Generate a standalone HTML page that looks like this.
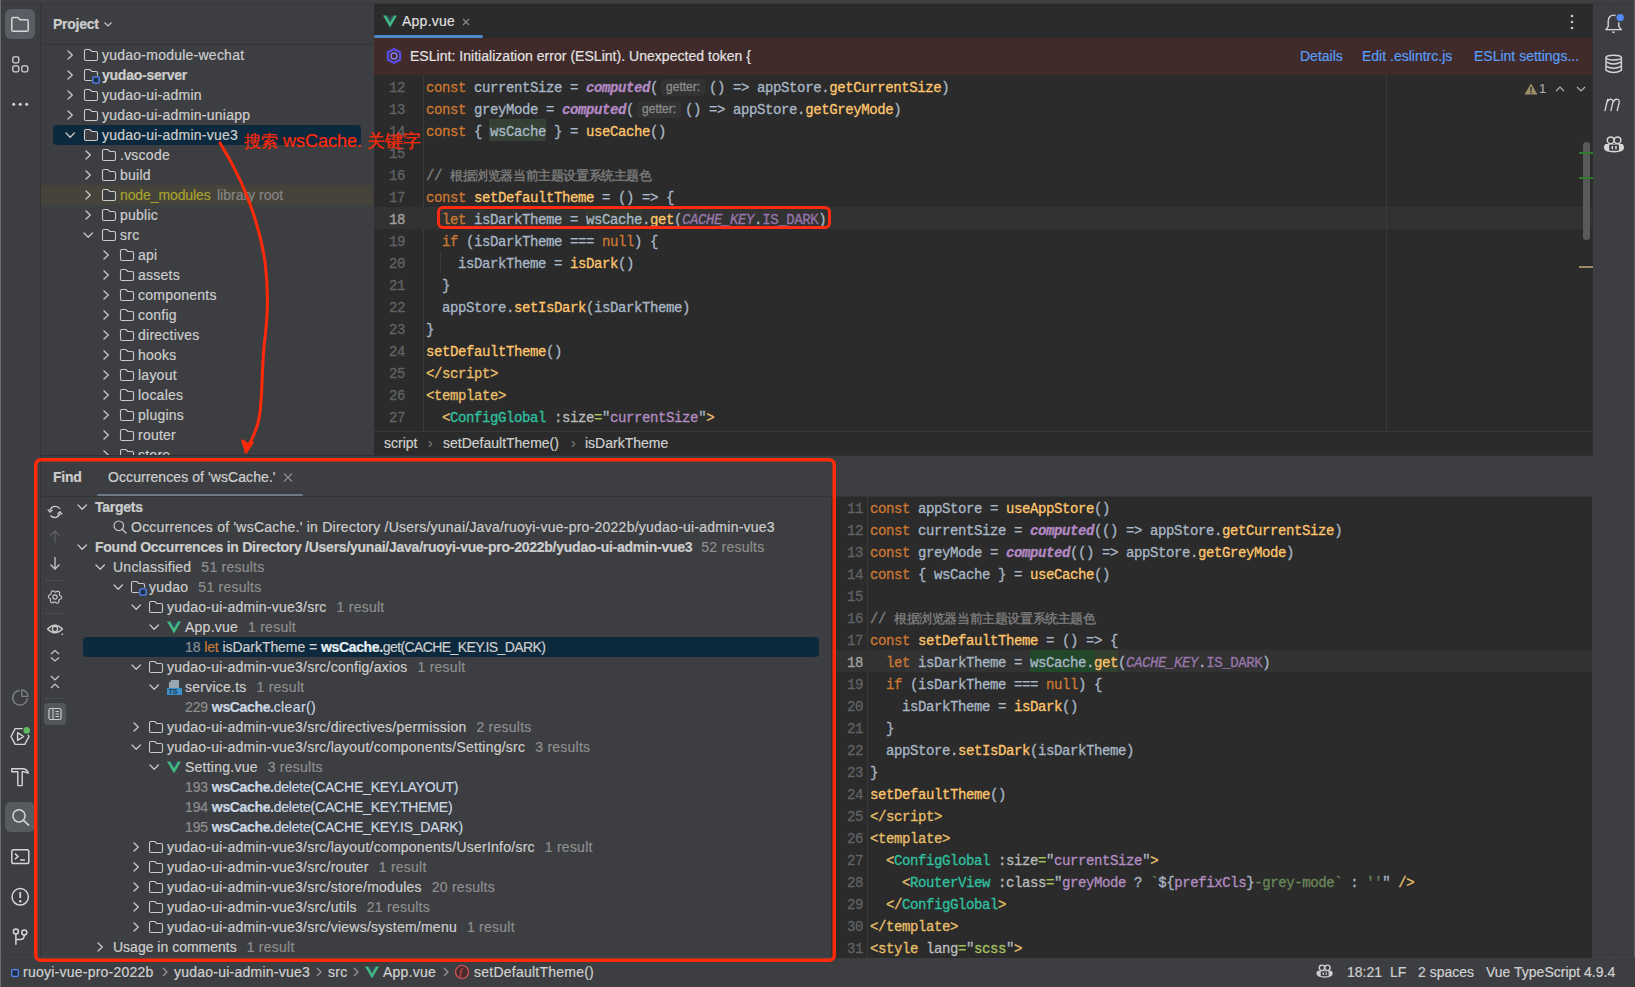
<!DOCTYPE html><html><head><meta charset="utf-8"><title>IDE</title><style>
html,body{margin:0;padding:0}
body{width:1635px;height:987px;overflow:hidden;position:relative;background:#3C3E41}
.t{position:absolute;white-space:pre;font-family:"Liberation Sans",sans-serif;font-size:14px;line-height:20px;color:#D2D2D2;letter-spacing:0.24px;-webkit-text-stroke:0.2px currentColor}
.t b,.b{font-weight:700;letter-spacing:-0.25px}

.m{position:absolute;white-space:pre;font-family:"Liberation Mono",monospace;font-size:14px;letter-spacing:-0.4px;line-height:22px;color:#A9B7C6;-webkit-text-stroke:0.3px currentColor}
.k{color:#CC7832}.d{color:#A9B7C6}.f{color:#FFC66D}.ci{color:#B389C5;font-style:italic;font-weight:700}
.c{color:#808080}.tg{color:#E8BF6A}.g{color:#2FC0A0}.a{color:#BABABA}.sg{color:#A5C25C}.sd{color:#6A8759}
.cj{font-size:13.33px}.v{color:#B48DC1}.cs{color:#9876AA;font-style:italic}.pr{color:#9876AA}.w{color:#A9B7C6}
</style></head><body><div style="position:absolute;left:0;top:0;width:1635px;height:3px;background:#3F4043"></div>
<div style="position:absolute;left:0;top:3px;width:1635px;height:1px;background:#38393B"></div>
<div style="position:absolute;left:0px;top:4px;width:41px;height:956px;background:#3C3E41;"></div>
<div style="position:absolute;left:0px;top:0px;width:1px;height:987px;background:#6B6D70;"></div>
<div style="position:absolute;left:40px;top:4px;width:1px;height:956px;background:#313335;"></div>
<div style="position:absolute;left:41px;top:4px;width:333px;height:451px;background:#3C3E41;"></div>
<div style="position:absolute;left:41px;top:44px;width:333px;height:1px;background:#333537;"></div>
<div style="position:absolute;left:373px;top:4px;width:1px;height:451px;background:#414245;"></div>
<div style="position:absolute;left:374px;top:4px;width:1219px;height:451px;background:#2B2B2B;"></div>
<div style="position:absolute;left:1593px;top:4px;width:1px;height:953px;background:#3A3B3E;"></div>
<div style="position:absolute;left:1593px;top:4px;width:42px;height:953px;background:#3C3E41;"></div>
<div style="position:absolute;left:1613px;top:4px;width:0;height:953px;border-left:1px dotted #36373A"></div>
<div style="position:absolute;left:1634px;top:0px;width:1px;height:957px;background:#5E5F62;"></div>
<div style="position:absolute;left:41px;top:455px;width:1551px;height:505px;background:#3C3E41;"></div>
<div style="position:absolute;left:41px;top:455px;width:1551px;height:1px;background:#2E3032;"></div>
<div style="position:absolute;left:0px;top:957px;width:1635px;height:30px;background:#3C3E41;"></div>
<div style="position:absolute;left:0;top:957px;width:1635px;height:0;border-top:1px dotted #4A4B4E"></div>
<div style="position:absolute;left:0px;top:0px;width:1px;height:987px;background:#6B6D70;"></div>
<div style="position:absolute;left:5px;top:9px;width:30px;height:30px;background:#5A5D63;border-radius:6px"></div>
<svg style="position:absolute;left:10px;top:14px;" width="20" height="20" viewBox="0 0 20 20" fill="none"><path d="M1.8 5 Q1.8 3.5 3.3 3.5 H7.8 L10 5.8 H16.7 Q18.2 5.8 18.2 7.3 V15.8 Q18.2 17.3 16.7 17.3 H3.3 Q1.8 17.3 1.8 15.8 Z" stroke="#D6D6D6" stroke-width="1.5"/></svg>
<svg style="position:absolute;left:10px;top:54px;" width="20" height="20" viewBox="0 0 20 20" fill="none"><rect x="2.8" y="2.8" width="6" height="6" rx="1.5" stroke="#D6D6D6" stroke-width="1.3"/><rect x="2.8" y="11.8" width="6" height="6" rx="1.5" stroke="#D6D6D6" stroke-width="1.3"/><rect x="11.8" y="11.8" width="6" height="6" rx="1.5" stroke="#D6D6D6" stroke-width="1.3"/></svg>
<svg style="position:absolute;left:10px;top:94px;" width="20" height="20" viewBox="0 0 20 20" fill="none"><circle cx="3.7" cy="10.3" r="1.5" fill="#D6D6D6"/><circle cx="10.2" cy="10.3" r="1.5" fill="#D6D6D6"/><circle cx="16.7" cy="10.3" r="1.5" fill="#D6D6D6"/></svg>
<div class="t" style="left:53px;top:14px;color:#CDCDCD;font-size:14px;line-height:20px;font-weight:700;letter-spacing:-0.25px;">Project</div>
<svg style="position:absolute;left:103px;top:19px;" width="10" height="10" viewBox="0 0 10 10" fill="none"><path d="M1.5 3.5 L5 7 L8.5 3.5" stroke="#C8C8C8" stroke-width="1.2" fill="none"/></svg>
<div style="position:absolute;left:41px;top:45px;width:332px;height:410px;overflow:hidden">
<svg style="position:absolute;left:23px;top:0px;" width="10" height="20" viewBox="0 0 10 20" fill="none"><path d="M4 6 L8.3 10 L4 14" stroke="#C8C8C8" stroke-width="1.3" stroke-linecap="round" stroke-linejoin="round"/></svg>
<svg style="position:absolute;left:42px;top:2px;" width="16" height="16" viewBox="0 0 16 16" fill="none"><path d="M1.5 4 Q1.5 2.5 3 2.5 H6.8 L8.8 4.5 H13 Q14.5 4.5 14.5 6 V12 Q14.5 13.5 13 13.5 H3 Q1.5 13.5 1.5 12 Z" stroke="#CACACA" stroke-width="1.1" fill="#3A3C3F"/></svg>
<div class="t" style="left:61px;top:0px;color:#CDCDCD;font-size:14px;line-height:20px;font-weight:400;">yudao-module-wechat</div>
<svg style="position:absolute;left:23px;top:20px;" width="10" height="20" viewBox="0 0 10 20" fill="none"><path d="M4 6 L8.3 10 L4 14" stroke="#C8C8C8" stroke-width="1.3" stroke-linecap="round" stroke-linejoin="round"/></svg>
<svg style="position:absolute;left:42px;top:22px;" width="18" height="18" viewBox="0 0 18 18" fill="none"><path d="M1.5 4 Q1.5 2.5 3 2.5 H6.8 L8.8 4.5 H13 Q14.5 4.5 14.5 6 V12 Q14.5 13.5 13 13.5 H3 Q1.5 13.5 1.5 12 Z" stroke="#CACACA" stroke-width="1.1" fill="#3A3C3F"/><rect x="8.6" y="8.6" width="8.8" height="8.8" fill="#3C3E41"/><rect x="9.8" y="9.8" width="6.4" height="6.4" rx="1.4" stroke="#548AF7" stroke-width="1.3" fill="#1E3048"/></svg>
<div class="t" style="left:61px;top:20px;color:#CDCDCD;font-size:14px;line-height:20px;font-weight:700;letter-spacing:-0.25px;">yudao-server</div>
<svg style="position:absolute;left:23px;top:40px;" width="10" height="20" viewBox="0 0 10 20" fill="none"><path d="M4 6 L8.3 10 L4 14" stroke="#C8C8C8" stroke-width="1.3" stroke-linecap="round" stroke-linejoin="round"/></svg>
<svg style="position:absolute;left:42px;top:42px;" width="16" height="16" viewBox="0 0 16 16" fill="none"><path d="M1.5 4 Q1.5 2.5 3 2.5 H6.8 L8.8 4.5 H13 Q14.5 4.5 14.5 6 V12 Q14.5 13.5 13 13.5 H3 Q1.5 13.5 1.5 12 Z" stroke="#CACACA" stroke-width="1.1" fill="#3A3C3F"/></svg>
<div class="t" style="left:61px;top:40px;color:#CDCDCD;font-size:14px;line-height:20px;font-weight:400;">yudao-ui-admin</div>
<svg style="position:absolute;left:23px;top:60px;" width="10" height="20" viewBox="0 0 10 20" fill="none"><path d="M4 6 L8.3 10 L4 14" stroke="#C8C8C8" stroke-width="1.3" stroke-linecap="round" stroke-linejoin="round"/></svg>
<svg style="position:absolute;left:42px;top:62px;" width="16" height="16" viewBox="0 0 16 16" fill="none"><path d="M1.5 4 Q1.5 2.5 3 2.5 H6.8 L8.8 4.5 H13 Q14.5 4.5 14.5 6 V12 Q14.5 13.5 13 13.5 H3 Q1.5 13.5 1.5 12 Z" stroke="#CACACA" stroke-width="1.1" fill="#3A3C3F"/></svg>
<div class="t" style="left:61px;top:60px;color:#CDCDCD;font-size:14px;line-height:20px;font-weight:400;">yudao-ui-admin-uniapp</div>
<div style="position:absolute;left:12px;top:80px;width:308px;height:20px;background:#0D293E;border-radius:4px"></div>
<svg style="position:absolute;left:23px;top:80px;" width="12" height="20" viewBox="0 0 12 20" fill="none"><path d="M2 8 L6.2 12.2 L10.4 8" stroke="#C8C8C8" stroke-width="1.3" stroke-linecap="round" stroke-linejoin="round"/></svg>
<svg style="position:absolute;left:42px;top:82px;" width="16" height="16" viewBox="0 0 16 16" fill="none"><path d="M1.5 4 Q1.5 2.5 3 2.5 H6.8 L8.8 4.5 H13 Q14.5 4.5 14.5 6 V12 Q14.5 13.5 13 13.5 H3 Q1.5 13.5 1.5 12 Z" stroke="#CACACA" stroke-width="1.1" fill="#3A3C3F"/></svg>
<div class="t" style="left:61px;top:80px;color:#CDCDCD;font-size:14px;line-height:20px;font-weight:400;">yudao-ui-admin-vue3</div>
<svg style="position:absolute;left:41px;top:100px;" width="10" height="20" viewBox="0 0 10 20" fill="none"><path d="M4 6 L8.3 10 L4 14" stroke="#C8C8C8" stroke-width="1.3" stroke-linecap="round" stroke-linejoin="round"/></svg>
<svg style="position:absolute;left:60px;top:102px;" width="16" height="16" viewBox="0 0 16 16" fill="none"><path d="M1.5 4 Q1.5 2.5 3 2.5 H6.8 L8.8 4.5 H13 Q14.5 4.5 14.5 6 V12 Q14.5 13.5 13 13.5 H3 Q1.5 13.5 1.5 12 Z" stroke="#CACACA" stroke-width="1.1" fill="#3A3C3F"/></svg>
<div class="t" style="left:79px;top:100px;color:#CDCDCD;font-size:14px;line-height:20px;font-weight:400;">.vscode</div>
<svg style="position:absolute;left:41px;top:120px;" width="10" height="20" viewBox="0 0 10 20" fill="none"><path d="M4 6 L8.3 10 L4 14" stroke="#C8C8C8" stroke-width="1.3" stroke-linecap="round" stroke-linejoin="round"/></svg>
<svg style="position:absolute;left:60px;top:122px;" width="16" height="16" viewBox="0 0 16 16" fill="none"><path d="M1.5 4 Q1.5 2.5 3 2.5 H6.8 L8.8 4.5 H13 Q14.5 4.5 14.5 6 V12 Q14.5 13.5 13 13.5 H3 Q1.5 13.5 1.5 12 Z" stroke="#CACACA" stroke-width="1.1" fill="#3A3C3F"/></svg>
<div class="t" style="left:79px;top:120px;color:#CDCDCD;font-size:14px;line-height:20px;font-weight:400;">build</div>
<div style="position:absolute;left:0px;top:140px;width:332px;height:20px;background:#45433A;"></div>
<svg style="position:absolute;left:41px;top:140px;" width="10" height="20" viewBox="0 0 10 20" fill="none"><path d="M4 6 L8.3 10 L4 14" stroke="#C8C8C8" stroke-width="1.3" stroke-linecap="round" stroke-linejoin="round"/></svg>
<svg style="position:absolute;left:60px;top:142px;" width="16" height="16" viewBox="0 0 16 16" fill="none"><path d="M1.5 4 Q1.5 2.5 3 2.5 H6.8 L8.8 4.5 H13 Q14.5 4.5 14.5 6 V12 Q14.5 13.5 13 13.5 H3 Q1.5 13.5 1.5 12 Z" stroke="#CACACA" stroke-width="1.1" fill="#3A3C3F"/></svg>
<div class="t" style="left:79px;top:140px;color:#A9A22E;font-size:14px;line-height:20px;font-weight:400;letter-spacing:-0.1px">node_modules</div>
<div class="t" style="left:176px;top:140px;color:#858585;font-size:14px;line-height:20px;font-weight:400;letter-spacing:0">library root</div>
<svg style="position:absolute;left:41px;top:160px;" width="10" height="20" viewBox="0 0 10 20" fill="none"><path d="M4 6 L8.3 10 L4 14" stroke="#C8C8C8" stroke-width="1.3" stroke-linecap="round" stroke-linejoin="round"/></svg>
<svg style="position:absolute;left:60px;top:162px;" width="16" height="16" viewBox="0 0 16 16" fill="none"><path d="M1.5 4 Q1.5 2.5 3 2.5 H6.8 L8.8 4.5 H13 Q14.5 4.5 14.5 6 V12 Q14.5 13.5 13 13.5 H3 Q1.5 13.5 1.5 12 Z" stroke="#CACACA" stroke-width="1.1" fill="#3A3C3F"/></svg>
<div class="t" style="left:79px;top:160px;color:#CDCDCD;font-size:14px;line-height:20px;font-weight:400;">public</div>
<svg style="position:absolute;left:41px;top:180px;" width="12" height="20" viewBox="0 0 12 20" fill="none"><path d="M2 8 L6.2 12.2 L10.4 8" stroke="#C8C8C8" stroke-width="1.3" stroke-linecap="round" stroke-linejoin="round"/></svg>
<svg style="position:absolute;left:60px;top:182px;" width="16" height="16" viewBox="0 0 16 16" fill="none"><path d="M1.5 4 Q1.5 2.5 3 2.5 H6.8 L8.8 4.5 H13 Q14.5 4.5 14.5 6 V12 Q14.5 13.5 13 13.5 H3 Q1.5 13.5 1.5 12 Z" stroke="#CACACA" stroke-width="1.1" fill="#3A3C3F"/></svg>
<div class="t" style="left:79px;top:180px;color:#CDCDCD;font-size:14px;line-height:20px;font-weight:400;">src</div>
<svg style="position:absolute;left:59px;top:200px;" width="10" height="20" viewBox="0 0 10 20" fill="none"><path d="M4 6 L8.3 10 L4 14" stroke="#C8C8C8" stroke-width="1.3" stroke-linecap="round" stroke-linejoin="round"/></svg>
<svg style="position:absolute;left:78px;top:202px;" width="16" height="16" viewBox="0 0 16 16" fill="none"><path d="M1.5 4 Q1.5 2.5 3 2.5 H6.8 L8.8 4.5 H13 Q14.5 4.5 14.5 6 V12 Q14.5 13.5 13 13.5 H3 Q1.5 13.5 1.5 12 Z" stroke="#CACACA" stroke-width="1.1" fill="#3A3C3F"/></svg>
<div class="t" style="left:97px;top:200px;color:#CDCDCD;font-size:14px;line-height:20px;font-weight:400;">api</div>
<svg style="position:absolute;left:59px;top:220px;" width="10" height="20" viewBox="0 0 10 20" fill="none"><path d="M4 6 L8.3 10 L4 14" stroke="#C8C8C8" stroke-width="1.3" stroke-linecap="round" stroke-linejoin="round"/></svg>
<svg style="position:absolute;left:78px;top:222px;" width="16" height="16" viewBox="0 0 16 16" fill="none"><path d="M1.5 4 Q1.5 2.5 3 2.5 H6.8 L8.8 4.5 H13 Q14.5 4.5 14.5 6 V12 Q14.5 13.5 13 13.5 H3 Q1.5 13.5 1.5 12 Z" stroke="#CACACA" stroke-width="1.1" fill="#3A3C3F"/></svg>
<div class="t" style="left:97px;top:220px;color:#CDCDCD;font-size:14px;line-height:20px;font-weight:400;">assets</div>
<svg style="position:absolute;left:59px;top:240px;" width="10" height="20" viewBox="0 0 10 20" fill="none"><path d="M4 6 L8.3 10 L4 14" stroke="#C8C8C8" stroke-width="1.3" stroke-linecap="round" stroke-linejoin="round"/></svg>
<svg style="position:absolute;left:78px;top:242px;" width="16" height="16" viewBox="0 0 16 16" fill="none"><path d="M1.5 4 Q1.5 2.5 3 2.5 H6.8 L8.8 4.5 H13 Q14.5 4.5 14.5 6 V12 Q14.5 13.5 13 13.5 H3 Q1.5 13.5 1.5 12 Z" stroke="#CACACA" stroke-width="1.1" fill="#3A3C3F"/></svg>
<div class="t" style="left:97px;top:240px;color:#CDCDCD;font-size:14px;line-height:20px;font-weight:400;">components</div>
<svg style="position:absolute;left:59px;top:260px;" width="10" height="20" viewBox="0 0 10 20" fill="none"><path d="M4 6 L8.3 10 L4 14" stroke="#C8C8C8" stroke-width="1.3" stroke-linecap="round" stroke-linejoin="round"/></svg>
<svg style="position:absolute;left:78px;top:262px;" width="16" height="16" viewBox="0 0 16 16" fill="none"><path d="M1.5 4 Q1.5 2.5 3 2.5 H6.8 L8.8 4.5 H13 Q14.5 4.5 14.5 6 V12 Q14.5 13.5 13 13.5 H3 Q1.5 13.5 1.5 12 Z" stroke="#CACACA" stroke-width="1.1" fill="#3A3C3F"/></svg>
<div class="t" style="left:97px;top:260px;color:#CDCDCD;font-size:14px;line-height:20px;font-weight:400;">config</div>
<svg style="position:absolute;left:59px;top:280px;" width="10" height="20" viewBox="0 0 10 20" fill="none"><path d="M4 6 L8.3 10 L4 14" stroke="#C8C8C8" stroke-width="1.3" stroke-linecap="round" stroke-linejoin="round"/></svg>
<svg style="position:absolute;left:78px;top:282px;" width="16" height="16" viewBox="0 0 16 16" fill="none"><path d="M1.5 4 Q1.5 2.5 3 2.5 H6.8 L8.8 4.5 H13 Q14.5 4.5 14.5 6 V12 Q14.5 13.5 13 13.5 H3 Q1.5 13.5 1.5 12 Z" stroke="#CACACA" stroke-width="1.1" fill="#3A3C3F"/></svg>
<div class="t" style="left:97px;top:280px;color:#CDCDCD;font-size:14px;line-height:20px;font-weight:400;">directives</div>
<svg style="position:absolute;left:59px;top:300px;" width="10" height="20" viewBox="0 0 10 20" fill="none"><path d="M4 6 L8.3 10 L4 14" stroke="#C8C8C8" stroke-width="1.3" stroke-linecap="round" stroke-linejoin="round"/></svg>
<svg style="position:absolute;left:78px;top:302px;" width="16" height="16" viewBox="0 0 16 16" fill="none"><path d="M1.5 4 Q1.5 2.5 3 2.5 H6.8 L8.8 4.5 H13 Q14.5 4.5 14.5 6 V12 Q14.5 13.5 13 13.5 H3 Q1.5 13.5 1.5 12 Z" stroke="#CACACA" stroke-width="1.1" fill="#3A3C3F"/></svg>
<div class="t" style="left:97px;top:300px;color:#CDCDCD;font-size:14px;line-height:20px;font-weight:400;">hooks</div>
<svg style="position:absolute;left:59px;top:320px;" width="10" height="20" viewBox="0 0 10 20" fill="none"><path d="M4 6 L8.3 10 L4 14" stroke="#C8C8C8" stroke-width="1.3" stroke-linecap="round" stroke-linejoin="round"/></svg>
<svg style="position:absolute;left:78px;top:322px;" width="16" height="16" viewBox="0 0 16 16" fill="none"><path d="M1.5 4 Q1.5 2.5 3 2.5 H6.8 L8.8 4.5 H13 Q14.5 4.5 14.5 6 V12 Q14.5 13.5 13 13.5 H3 Q1.5 13.5 1.5 12 Z" stroke="#CACACA" stroke-width="1.1" fill="#3A3C3F"/></svg>
<div class="t" style="left:97px;top:320px;color:#CDCDCD;font-size:14px;line-height:20px;font-weight:400;">layout</div>
<svg style="position:absolute;left:59px;top:340px;" width="10" height="20" viewBox="0 0 10 20" fill="none"><path d="M4 6 L8.3 10 L4 14" stroke="#C8C8C8" stroke-width="1.3" stroke-linecap="round" stroke-linejoin="round"/></svg>
<svg style="position:absolute;left:78px;top:342px;" width="16" height="16" viewBox="0 0 16 16" fill="none"><path d="M1.5 4 Q1.5 2.5 3 2.5 H6.8 L8.8 4.5 H13 Q14.5 4.5 14.5 6 V12 Q14.5 13.5 13 13.5 H3 Q1.5 13.5 1.5 12 Z" stroke="#CACACA" stroke-width="1.1" fill="#3A3C3F"/></svg>
<div class="t" style="left:97px;top:340px;color:#CDCDCD;font-size:14px;line-height:20px;font-weight:400;">locales</div>
<svg style="position:absolute;left:59px;top:360px;" width="10" height="20" viewBox="0 0 10 20" fill="none"><path d="M4 6 L8.3 10 L4 14" stroke="#C8C8C8" stroke-width="1.3" stroke-linecap="round" stroke-linejoin="round"/></svg>
<svg style="position:absolute;left:78px;top:362px;" width="16" height="16" viewBox="0 0 16 16" fill="none"><path d="M1.5 4 Q1.5 2.5 3 2.5 H6.8 L8.8 4.5 H13 Q14.5 4.5 14.5 6 V12 Q14.5 13.5 13 13.5 H3 Q1.5 13.5 1.5 12 Z" stroke="#CACACA" stroke-width="1.1" fill="#3A3C3F"/></svg>
<div class="t" style="left:97px;top:360px;color:#CDCDCD;font-size:14px;line-height:20px;font-weight:400;">plugins</div>
<svg style="position:absolute;left:59px;top:380px;" width="10" height="20" viewBox="0 0 10 20" fill="none"><path d="M4 6 L8.3 10 L4 14" stroke="#C8C8C8" stroke-width="1.3" stroke-linecap="round" stroke-linejoin="round"/></svg>
<svg style="position:absolute;left:78px;top:382px;" width="16" height="16" viewBox="0 0 16 16" fill="none"><path d="M1.5 4 Q1.5 2.5 3 2.5 H6.8 L8.8 4.5 H13 Q14.5 4.5 14.5 6 V12 Q14.5 13.5 13 13.5 H3 Q1.5 13.5 1.5 12 Z" stroke="#CACACA" stroke-width="1.1" fill="#3A3C3F"/></svg>
<div class="t" style="left:97px;top:380px;color:#CDCDCD;font-size:14px;line-height:20px;font-weight:400;">router</div>
<svg style="position:absolute;left:59px;top:400px;" width="10" height="20" viewBox="0 0 10 20" fill="none"><path d="M4 6 L8.3 10 L4 14" stroke="#C8C8C8" stroke-width="1.3" stroke-linecap="round" stroke-linejoin="round"/></svg>
<svg style="position:absolute;left:78px;top:402px;" width="16" height="16" viewBox="0 0 16 16" fill="none"><path d="M1.5 4 Q1.5 2.5 3 2.5 H6.8 L8.8 4.5 H13 Q14.5 4.5 14.5 6 V12 Q14.5 13.5 13 13.5 H3 Q1.5 13.5 1.5 12 Z" stroke="#CACACA" stroke-width="1.1" fill="#3A3C3F"/></svg>
<div class="t" style="left:97px;top:400px;color:#CDCDCD;font-size:14px;line-height:20px;font-weight:400;">store</div>
</div>
<svg style="position:absolute;left:382px;top:13px;" width="16" height="16" viewBox="0 0 16 16" fill="none"><path d="M1 2.5 H4.2 L8 9 L11.8 2.5 H15 L8 14.5 Z" fill="#41B883"/><path d="M4.2 2.5 H6.6 L8 5 L9.4 2.5 H11.8 L8 9 Z" fill="#35495E"/></svg>
<div class="t" style="left:402px;top:11px;color:#DFDFDF;font-size:14px;line-height:20px;font-weight:400;">App.vue</div>
<svg style="position:absolute;left:460px;top:16px;" width="12" height="12" viewBox="0 0 12 12" fill="none"><path d="M3 3 L9 9 M9 3 L3 9" stroke="#8C8C8C" stroke-width="1.1"/></svg>
<div style="position:absolute;left:374px;top:35px;width:109px;height:3px;background:#4A88C7;border-radius:2px"></div>
<svg style="position:absolute;left:1566px;top:12px;" width="12" height="20" viewBox="0 0 12 20" fill="none"><circle cx="6" cy="4" r="1.3" fill="#C8C8C8"/><circle cx="6" cy="10" r="1.3" fill="#C8C8C8"/><circle cx="6" cy="16" r="1.3" fill="#C8C8C8"/></svg>
<div style="position:absolute;left:374px;top:38px;width:1218px;height:37px;background:#402A2A;"></div>
<svg style="position:absolute;left:385px;top:47px;" width="18" height="18" viewBox="0 0 18 18" fill="none"><path d="M9 2 L15.1 5.5 V12.5 L9 16 L2.9 12.5 V5.5 Z" stroke="#5B4EE6" stroke-width="2.2" fill="none"/><circle cx="9" cy="9" r="3" stroke="#8A7FF0" stroke-width="1.4"/></svg>
<div class="t" style="left:410px;top:46px;color:#E2E2E2;font-size:14px;line-height:20px;font-weight:400;letter-spacing:0.03px">ESLint: Initialization error (ESLint). Unexpected token {</div>
<div class="t" style="left:1300px;top:46px;color:#589DF6;font-size:14px;line-height:20px;font-weight:400;letter-spacing:0">Details</div>
<div class="t" style="left:1362px;top:46px;color:#589DF6;font-size:14px;line-height:20px;font-weight:400;letter-spacing:0">Edit .eslintrc.js</div>
<div class="t" style="left:1474px;top:46px;color:#589DF6;font-size:14px;line-height:20px;font-weight:400;letter-spacing:0">ESLint settings...</div>
<div style="position:absolute;left:423px;top:75px;width:1px;height:357px;background:#393939;"></div>
<div style="position:absolute;left:374px;top:207px;width:1218px;height:22px;background:#323232;"></div>
<div style="position:absolute;left:1386px;top:75px;width:1px;height:357px;background:#393939;"></div>
<div style="position:absolute;left:489px;top:119px;width:57px;height:22px;background:#344134;"></div>
<div style="position:absolute;left:586px;top:207px;width:56px;height:22px;background:#33392F;"></div>
<div class="m" style="left:374px;top:77px;width:31px;text-align:right;color:#606366">12</div>
<div class="m" style="left:426px;top:77px"><span class="k">const </span><span class="d">currentSize = </span><span class="ci">computed</span><span class="d">(</span><span style="display:inline-block;background:#333333;color:#8C8C8C;font-family:'Liberation Sans';font-size:12px;letter-spacing:0;line-height:17px;padding:0 5px;border-radius:4px;margin:0 4px 0 3px;vertical-align:1px">getter:</span><span class="d">() =&gt; appStore.</span><span class="f">getCurrentSize</span><span class="d">)</span></div>
<div class="m" style="left:374px;top:99px;width:31px;text-align:right;color:#606366">13</div>
<div class="m" style="left:426px;top:99px"><span class="k">const </span><span class="d">greyMode = </span><span class="ci">computed</span><span class="d">(</span><span style="display:inline-block;background:#333333;color:#8C8C8C;font-family:'Liberation Sans';font-size:12px;letter-spacing:0;line-height:17px;padding:0 5px;border-radius:4px;margin:0 4px 0 3px;vertical-align:1px">getter:</span><span class="d">() =&gt; appStore.</span><span class="f">getGreyMode</span><span class="d">)</span></div>
<div class="m" style="left:374px;top:121px;width:31px;text-align:right;color:#606366">14</div>
<div class="m" style="left:426px;top:121px"><span class="k">const </span><span class="d">{ wsCache } = </span><span class="f">useCache</span><span class="d">()</span></div>
<div class="m" style="left:374px;top:143px;width:31px;text-align:right;color:#606366">15</div>
<div class="m" style="left:426px;top:143px"></div>
<div class="m" style="left:374px;top:165px;width:31px;text-align:right;color:#606366">16</div>
<div class="m" style="left:426px;top:165px"><span class="c">// </span><span class="c cj">根据浏览器当前主题设置系统主题色</span></div>
<div class="m" style="left:374px;top:187px;width:31px;text-align:right;color:#606366">17</div>
<div class="m" style="left:426px;top:187px"><span class="k">const </span><span class="f">setDefaultTheme</span><span class="d"> = () =&gt; {</span></div>
<div class="m" style="left:374px;top:209px;width:31px;text-align:right;color:#A4A3A3">18</div>
<div class="m" style="left:426px;top:209px"><span class="d">  </span><span class="k">let </span><span class="d">isDarkTheme = wsCache.</span><span class="f">get</span><span class="d">(</span><span class="cs">CACHE_KEY</span><span class="d">.</span><span class="pr">IS_DARK</span><span class="d">)</span></div>
<div class="m" style="left:374px;top:231px;width:31px;text-align:right;color:#606366">19</div>
<div class="m" style="left:426px;top:231px"><span class="d">  </span><span class="k">if </span><span class="d">(isDarkTheme === </span><span class="k">null</span><span class="d">) {</span></div>
<div class="m" style="left:374px;top:253px;width:31px;text-align:right;color:#606366">20</div>
<div class="m" style="left:426px;top:253px"><span class="d">    isDarkTheme = </span><span class="f">isDark</span><span class="d">()</span></div>
<div class="m" style="left:374px;top:275px;width:31px;text-align:right;color:#606366">21</div>
<div class="m" style="left:426px;top:275px"><span class="d">  }</span></div>
<div class="m" style="left:374px;top:297px;width:31px;text-align:right;color:#606366">22</div>
<div class="m" style="left:426px;top:297px"><span class="d">  appStore.</span><span class="f">setIsDark</span><span class="d">(isDarkTheme)</span></div>
<div class="m" style="left:374px;top:319px;width:31px;text-align:right;color:#606366">23</div>
<div class="m" style="left:426px;top:319px"><span class="d">}</span></div>
<div class="m" style="left:374px;top:341px;width:31px;text-align:right;color:#606366">24</div>
<div class="m" style="left:426px;top:341px"><span class="f">setDefaultTheme</span><span class="d">()</span></div>
<div class="m" style="left:374px;top:363px;width:31px;text-align:right;color:#606366">25</div>
<div class="m" style="left:426px;top:363px"><span class="tg">&lt;/script&gt;</span></div>
<div class="m" style="left:374px;top:385px;width:31px;text-align:right;color:#606366">26</div>
<div class="m" style="left:426px;top:385px"><span class="tg">&lt;template&gt;</span></div>
<div class="m" style="left:374px;top:407px;width:31px;text-align:right;color:#606366">27</div>
<div class="m" style="left:426px;top:407px"><span class="d">  </span><span class="tg">&lt;</span><span class="g">ConfigGlobal</span><span class="a"> :size</span><span class="sg">=</span><span class="d">"</span><span class="v">currentSize</span><span class="d">"</span><span class="tg">&gt;</span></div>
<div style="position:absolute;left:440px;top:251px;width:1px;height:22px;background:#3A3A3A;"></div>
<div style="position:absolute;left:437px;top:206px;width:388px;height:17px;border:3px solid #FF2A12;border-radius:6px"></div>
<svg style="position:absolute;left:1523px;top:82px;" width="16" height="14" viewBox="0 0 16 14" fill="none"><path d="M8 1.5 L14.5 12.5 H1.5 Z" fill="#9C8F6A"/><rect x="7.3" y="5" width="1.4" height="4.2" fill="#2B2B2B"/><rect x="7.3" y="10" width="1.4" height="1.4" fill="#2B2B2B"/></svg>
<div class="t" style="left:1539px;top:79px;color:#A9A9A9;font-size:13px;line-height:20px;font-weight:400;">1</div>
<svg style="position:absolute;left:1553px;top:82px;" width="14" height="14" viewBox="0 0 14 14" fill="none"><path d="M3 9 L7 5 L11 9" stroke="#B0B0B0" stroke-width="1.2" fill="none"/></svg>
<svg style="position:absolute;left:1574px;top:82px;" width="14" height="14" viewBox="0 0 14 14" fill="none"><path d="M3 5 L7 9 L11 5" stroke="#B0B0B0" stroke-width="1.2" fill="none"/></svg>
<div style="position:absolute;left:1583px;top:142px;width:7px;height:98px;background:#58595B;border-radius:3.5px"></div>
<div style="position:absolute;left:1579px;top:152px;width:14px;height:2px;background:#2E7A30;"></div>
<div style="position:absolute;left:1579px;top:177px;width:14px;height:2px;background:#2E7A30;"></div>
<div style="position:absolute;left:1579px;top:266px;width:14px;height:2px;background:#9C8A66;"></div>
<div style="position:absolute;left:374px;top:431px;width:1218px;height:1px;background:#393939;"></div>
<div class="t" style="left:384px;top:433px;color:#CFCFCF;font-size:14px;line-height:20px;font-weight:400;letter-spacing:0">script</div>
<div class="t" style="left:428px;top:433px;color:#7A7A7A;font-size:14px;line-height:20px;font-weight:400;">›</div>
<div class="t" style="left:443px;top:433px;color:#CFCFCF;font-size:14px;line-height:20px;font-weight:400;letter-spacing:0">setDefaultTheme()</div>
<div class="t" style="left:571px;top:433px;color:#7A7A7A;font-size:14px;line-height:20px;font-weight:400;">›</div>
<div class="t" style="left:585px;top:433px;color:#CFCFCF;font-size:14px;line-height:20px;font-weight:400;letter-spacing:0">isDarkTheme</div>
<div class="t" style="left:53px;top:467px;color:#CDCDCD;font-size:14px;line-height:20px;font-weight:700;letter-spacing:-0.25px;">Find</div>
<div class="t" style="left:108px;top:467px;color:#D0D0D0;font-size:14px;line-height:20px;font-weight:400;letter-spacing:0.08px">Occurrences of 'wsCache.'</div>
<svg style="position:absolute;left:281px;top:470px;" width="14" height="14" viewBox="0 0 14 14" fill="none"><path d="M3 3.5 L11 11.5 M11 3.5 L3 11.5" stroke="#8C8C8C" stroke-width="1.2"/></svg>
<div style="position:absolute;left:97px;top:494px;width:206px;height:3px;background:#6E7A85;border-radius:1.5px"></div>
<div style="position:absolute;left:41px;top:496px;width:1551px;height:1px;background:#333537;"></div>
<div style="position:absolute;left:832px;top:497px;width:760px;height:461px;background:#2B2B2B;"></div>
<div style="position:absolute;left:831px;top:497px;width:1px;height:461px;background:#303234;"></div>
<div style="position:absolute;left:867px;top:497px;width:1px;height:461px;background:#393939;"></div>
<div style="position:absolute;left:832px;top:650px;width:760px;height:22px;background:#323232;"></div>
<div style="position:absolute;left:1030px;top:650px;width:64px;height:22px;background:#22472A;"></div>
<div style="position:absolute;left:1094px;top:650px;width:24px;height:22px;background:#34402F;"></div>
<div class="m" style="left:832px;top:498px;width:31px;text-align:right;color:#606366">11</div>
<div class="m" style="left:870px;top:498px"><span class="k">const </span><span class="d">appStore = </span><span class="f">useAppStore</span><span class="d">()</span></div>
<div class="m" style="left:832px;top:520px;width:31px;text-align:right;color:#606366">12</div>
<div class="m" style="left:870px;top:520px"><span class="k">const </span><span class="d">currentSize = </span><span class="ci">computed</span><span class="d">(() =&gt; appStore.</span><span class="f">getCurrentSize</span><span class="d">)</span></div>
<div class="m" style="left:832px;top:542px;width:31px;text-align:right;color:#606366">13</div>
<div class="m" style="left:870px;top:542px"><span class="k">const </span><span class="d">greyMode = </span><span class="ci">computed</span><span class="d">(() =&gt; appStore.</span><span class="f">getGreyMode</span><span class="d">)</span></div>
<div class="m" style="left:832px;top:564px;width:31px;text-align:right;color:#606366">14</div>
<div class="m" style="left:870px;top:564px"><span class="k">const </span><span class="d">{ wsCache } = </span><span class="f">useCache</span><span class="d">()</span></div>
<div class="m" style="left:832px;top:586px;width:31px;text-align:right;color:#606366">15</div>
<div class="m" style="left:870px;top:586px"></div>
<div class="m" style="left:832px;top:608px;width:31px;text-align:right;color:#606366">16</div>
<div class="m" style="left:870px;top:608px"><span class="c">// </span><span class="c cj">根据浏览器当前主题设置系统主题色</span></div>
<div class="m" style="left:832px;top:630px;width:31px;text-align:right;color:#606366">17</div>
<div class="m" style="left:870px;top:630px"><span class="k">const </span><span class="f">setDefaultTheme</span><span class="d"> = () =&gt; {</span></div>
<div class="m" style="left:832px;top:652px;width:31px;text-align:right;color:#A4A3A3">18</div>
<div class="m" style="left:870px;top:652px"><span class="d">  </span><span class="k">let </span><span class="d">isDarkTheme = wsCache.</span><span class="f">get</span><span class="d">(</span><span class="cs">CACHE_KEY</span><span class="d">.</span><span class="pr">IS_DARK</span><span class="d">)</span></div>
<div class="m" style="left:832px;top:674px;width:31px;text-align:right;color:#606366">19</div>
<div class="m" style="left:870px;top:674px"><span class="d">  </span><span class="k">if </span><span class="d">(isDarkTheme === </span><span class="k">null</span><span class="d">) {</span></div>
<div class="m" style="left:832px;top:696px;width:31px;text-align:right;color:#606366">20</div>
<div class="m" style="left:870px;top:696px"><span class="d">    isDarkTheme = </span><span class="f">isDark</span><span class="d">()</span></div>
<div class="m" style="left:832px;top:718px;width:31px;text-align:right;color:#606366">21</div>
<div class="m" style="left:870px;top:718px"><span class="d">  }</span></div>
<div class="m" style="left:832px;top:740px;width:31px;text-align:right;color:#606366">22</div>
<div class="m" style="left:870px;top:740px"><span class="d">  appStore.</span><span class="f">setIsDark</span><span class="d">(isDarkTheme)</span></div>
<div class="m" style="left:832px;top:762px;width:31px;text-align:right;color:#606366">23</div>
<div class="m" style="left:870px;top:762px"><span class="d">}</span></div>
<div class="m" style="left:832px;top:784px;width:31px;text-align:right;color:#606366">24</div>
<div class="m" style="left:870px;top:784px"><span class="f">setDefaultTheme</span><span class="d">()</span></div>
<div class="m" style="left:832px;top:806px;width:31px;text-align:right;color:#606366">25</div>
<div class="m" style="left:870px;top:806px"><span class="tg">&lt;/script&gt;</span></div>
<div class="m" style="left:832px;top:828px;width:31px;text-align:right;color:#606366">26</div>
<div class="m" style="left:870px;top:828px"><span class="tg">&lt;template&gt;</span></div>
<div class="m" style="left:832px;top:850px;width:31px;text-align:right;color:#606366">27</div>
<div class="m" style="left:870px;top:850px"><span class="d">  </span><span class="tg">&lt;</span><span class="g">ConfigGlobal</span><span class="a"> :size</span><span class="sg">=</span><span class="d">"</span><span class="v">currentSize</span><span class="d">"</span><span class="tg">&gt;</span></div>
<div class="m" style="left:832px;top:872px;width:31px;text-align:right;color:#606366">28</div>
<div class="m" style="left:870px;top:872px"><span class="d">    </span><span class="tg">&lt;</span><span class="g">RouterView</span><span class="a"> :class</span><span class="sg">=</span><span class="d">"</span><span class="v">greyMode</span><span class="d"> ? </span><span class="sd">`</span><span class="d">${</span><span class="v">prefixCls</span><span class="d">}</span><span class="sd">-grey-mode`</span><span class="d"> : </span><span class="sd">''</span><span class="d">"</span><span class="tg"> /&gt;</span></div>
<div class="m" style="left:832px;top:894px;width:31px;text-align:right;color:#606366">29</div>
<div class="m" style="left:870px;top:894px"><span class="d">  </span><span class="tg">&lt;/</span><span class="g">ConfigGlobal</span><span class="tg">&gt;</span></div>
<div class="m" style="left:832px;top:916px;width:31px;text-align:right;color:#606366">30</div>
<div class="m" style="left:870px;top:916px"><span class="tg">&lt;/template&gt;</span></div>
<div class="m" style="left:832px;top:938px;width:31px;text-align:right;color:#606366">31</div>
<div class="m" style="left:870px;top:938px"><span class="tg">&lt;style </span><span class="a">lang</span><span class="sg">=</span><span class="d">"</span><span class="sg">scss</span><span class="d">"</span><span class="tg">&gt;</span></div>
<svg style="position:absolute;left:45px;top:502px;" width="20" height="20" viewBox="0 0 20 20" fill="none"><path d="M5 8.5 A5.5 5.5 0 0 1 15 7" stroke="#C8C8C8" stroke-width="1.3" fill="none"/><path d="M2.8 7.3 L5 10 L7.5 7.8" stroke="#C8C8C8" stroke-width="1.3" fill="none"/><path d="M15 11.5 A5.5 5.5 0 0 1 5.5 13.5" stroke="#C8C8C8" stroke-width="1.3" fill="none"/><path d="M12.5 12.2 L15 9.8 L17.2 12.5" stroke="#C8C8C8" stroke-width="1.3" fill="none"/></svg>
<svg style="position:absolute;left:45px;top:527px;" width="20" height="20" viewBox="0 0 20 20" fill="none"><path d="M10 4 V16 M5.5 8.5 L10 4 L14.5 8.5" stroke="#5E6063" stroke-width="1.3" fill="none"/></svg>
<svg style="position:absolute;left:45px;top:553px;" width="20" height="20" viewBox="0 0 20 20" fill="none"><path d="M10 4 V16 M5.5 11.5 L10 16 L14.5 11.5" stroke="#C8C8C8" stroke-width="1.3" fill="none"/></svg>
<div style="position:absolute;left:45px;top:580px;width:20px;height:1px;background:#4A4C4F;"></div>
<svg style="position:absolute;left:45px;top:587px;" width="20" height="20" viewBox="0 0 20 20" fill="none"><circle cx="10" cy="10" r="2.1" stroke="#C8C8C8" stroke-width="1.2"/><path d="M16.60 10.00 L16.50 11.15 L15.64 12.05 L14.33 12.50 L13.83 13.21 L13.86 14.60 L13.30 15.72 L12.26 16.20 L11.04 15.91 L10.00 15.00 L9.13 14.92 L7.95 15.64 L6.70 15.72 L5.76 15.06 L5.40 13.86 L5.67 12.50 L5.30 11.71 L4.09 11.04 L3.40 10.00 L3.50 8.85 L4.36 7.95 L5.67 7.50 L6.17 6.79 L6.14 5.40 L6.70 4.28 L7.74 3.80 L8.96 4.09 L10.00 5.00 L10.87 5.08 L12.05 4.36 L13.30 4.28 L14.24 4.94 L14.60 6.14 L14.33 7.50 L14.70 8.29 L15.91 8.96 Z" stroke="#C8C8C8" stroke-width="1.15" stroke-linejoin="round" fill="none"/></svg>
<div style="position:absolute;left:45px;top:613px;width:20px;height:1px;background:#4A4C4F;"></div>
<svg style="position:absolute;left:45px;top:619px;" width="20" height="20" viewBox="0 0 20 20" fill="none"><path d="M2.5 10 Q10 2.5 17.5 10 Q10 17.5 2.5 10 Z" stroke="#C8C8C8" stroke-width="1.3" fill="none"/><circle cx="10" cy="10" r="2.6" stroke="#C8C8C8" stroke-width="1.3"/><path d="M16 16 L18 14 V16 Z" fill="#C8C8C8"/></svg>
<svg style="position:absolute;left:45px;top:646px;" width="20" height="20" viewBox="0 0 20 20" fill="none"><path d="M6 8 L10 4.5 L14 8 M6 11.5 L10 15 L14 11.5" stroke="#C8C8C8" stroke-width="1.2" fill="none"/></svg>
<svg style="position:absolute;left:45px;top:672px;" width="20" height="20" viewBox="0 0 20 20" fill="none"><path d="M6 4 L10 8 L14 4 M6 16 L10 12 L14 16" stroke="#C8C8C8" stroke-width="1.2" fill="none"/></svg>
<div style="position:absolute;left:45px;top:698px;width:20px;height:1px;background:#4A4C4F;"></div>
<div style="position:absolute;left:44px;top:703px;width:22px;height:22px;background:#53565B;border-radius:4px"></div>
<svg style="position:absolute;left:45px;top:704px;" width="20" height="20" viewBox="0 0 20 20" fill="none"><rect x="4" y="4.5" width="12" height="11" rx="1.5" stroke="#C8C8C8" stroke-width="1.2"/><path d="M8 4.5 V15.5 M10.5 7.5 H14 M10.5 10 H14 M10.5 12.5 H14" stroke="#C8C8C8" stroke-width="1.1"/></svg>
<div style="position:absolute;left:83px;top:637px;width:736px;height:20px;background:#0D293E;border-radius:4px"></div>
<svg style="position:absolute;left:76px;top:497px;" width="12" height="20" viewBox="0 0 12 20" fill="none"><path d="M2 8 L6.2 12.2 L10.4 8" stroke="#C8C8C8" stroke-width="1.3" stroke-linecap="round" stroke-linejoin="round"/></svg>
<div class="t" style="left:95px;top:497px"><span style="color:#CDCDCD;letter-spacing:-0.25px;font-weight:700;">Targets</span></div>
<svg style="position:absolute;left:112px;top:519px;" width="16" height="16" viewBox="0 0 16 16" fill="none"><circle cx="6.8" cy="6.8" r="4.8" stroke="#C8C8C8" stroke-width="1.2"/><path d="M10.3 10.3 L14 14" stroke="#C8C8C8" stroke-width="1.3" stroke-linecap="round"/></svg>
<div class="t" style="left:131px;top:517px"><span style="color:#CDCDCD;">Occurrences of 'wsCache.' in Directory /Users/yunai/Java/ruoyi-vue-pro-2022b/yudao-ui-admin-vue3</span></div>
<svg style="position:absolute;left:76px;top:537px;" width="12" height="20" viewBox="0 0 12 20" fill="none"><path d="M2 8 L6.2 12.2 L10.4 8" stroke="#C8C8C8" stroke-width="1.3" stroke-linecap="round" stroke-linejoin="round"/></svg>
<div class="t" style="left:95px;top:537px"><span style="color:#CDCDCD;letter-spacing:-0.25px;font-weight:700;">Found Occurrences in Directory /Users/yunai/Java/ruoyi-vue-pro-2022b/yudao-ui-admin-vue3</span><span style="color:#8E8E8E;margin-left:9px;">52 results</span></div>
<svg style="position:absolute;left:94px;top:557px;" width="12" height="20" viewBox="0 0 12 20" fill="none"><path d="M2 8 L6.2 12.2 L10.4 8" stroke="#C8C8C8" stroke-width="1.3" stroke-linecap="round" stroke-linejoin="round"/></svg>
<div class="t" style="left:113px;top:557px"><span style="color:#CDCDCD;">Unclassified</span><span style="color:#8E8E8E;margin-left:10px;">51 results</span></div>
<svg style="position:absolute;left:112px;top:577px;" width="12" height="20" viewBox="0 0 12 20" fill="none"><path d="M2 8 L6.2 12.2 L10.4 8" stroke="#C8C8C8" stroke-width="1.3" stroke-linecap="round" stroke-linejoin="round"/></svg>
<div class="t" style="left:131px;top:577px"></div>
<svg style="position:absolute;left:130px;top:579px;" width="18" height="18" viewBox="0 0 18 18" fill="none"><path d="M1.5 4 Q1.5 2.5 3 2.5 H6.8 L8.8 4.5 H13 Q14.5 4.5 14.5 6 V12 Q14.5 13.5 13 13.5 H3 Q1.5 13.5 1.5 12 Z" stroke="#CACACA" stroke-width="1.1" fill="#3A3C3F"/><rect x="8.6" y="8.6" width="8.8" height="8.8" fill="#3C3E41"/><rect x="9.8" y="9.8" width="6.4" height="6.4" rx="1.4" stroke="#548AF7" stroke-width="1.3" fill="#1E3048"/></svg>
<div class="t" style="left:149px;top:577px"><span style="color:#CDCDCD;">yudao</span><span style="color:#8E8E8E;margin-left:10px;">51 results</span></div>
<svg style="position:absolute;left:130px;top:597px;" width="12" height="20" viewBox="0 0 12 20" fill="none"><path d="M2 8 L6.2 12.2 L10.4 8" stroke="#C8C8C8" stroke-width="1.3" stroke-linecap="round" stroke-linejoin="round"/></svg>
<svg style="position:absolute;left:148px;top:599px;" width="16" height="16" viewBox="0 0 16 16" fill="none"><path d="M1.5 4 Q1.5 2.5 3 2.5 H6.8 L8.8 4.5 H13 Q14.5 4.5 14.5 6 V12 Q14.5 13.5 13 13.5 H3 Q1.5 13.5 1.5 12 Z" stroke="#CACACA" stroke-width="1.1" fill="#3A3C3F"/></svg>
<div class="t" style="left:167px;top:597px"><span style="color:#CDCDCD;">yudao-ui-admin-vue3/src</span><span style="color:#8E8E8E;margin-left:10px;">1 result</span></div>
<svg style="position:absolute;left:148px;top:617px;" width="12" height="20" viewBox="0 0 12 20" fill="none"><path d="M2 8 L6.2 12.2 L10.4 8" stroke="#C8C8C8" stroke-width="1.3" stroke-linecap="round" stroke-linejoin="round"/></svg>
<svg style="position:absolute;left:166px;top:619px;" width="16" height="16" viewBox="0 0 16 16" fill="none"><path d="M1 2.5 H4.2 L8 9 L11.8 2.5 H15 L8 14.5 Z" fill="#41B883"/><path d="M4.2 2.5 H6.6 L8 5 L9.4 2.5 H11.8 L8 9 Z" fill="#35495E"/></svg>
<div class="t" style="left:185px;top:617px"><span style="color:#CDCDCD;">App.vue</span><span style="color:#8E8E8E;margin-left:10px;">1 result</span></div>
<div class="t" style="left:185px;top:637px;letter-spacing:-0.1px"><span style="color:#8E8E8E;">18</span> <span style="color:#CC7832;">let</span><span style="color:#CDCDCD;letter-spacing:-0.05px;"> isDarkTheme = </span><span style="color:#E6EEF5;letter-spacing:-0.25px;font-weight:700;letter-spacing:-0.35px;">wsCache.</span><span style="color:#CDCDCD;letter-spacing:-0.6px;">get(CACHE_KEY.IS_DARK)</span></div>
<svg style="position:absolute;left:130px;top:657px;" width="12" height="20" viewBox="0 0 12 20" fill="none"><path d="M2 8 L6.2 12.2 L10.4 8" stroke="#C8C8C8" stroke-width="1.3" stroke-linecap="round" stroke-linejoin="round"/></svg>
<svg style="position:absolute;left:148px;top:659px;" width="16" height="16" viewBox="0 0 16 16" fill="none"><path d="M1.5 4 Q1.5 2.5 3 2.5 H6.8 L8.8 4.5 H13 Q14.5 4.5 14.5 6 V12 Q14.5 13.5 13 13.5 H3 Q1.5 13.5 1.5 12 Z" stroke="#CACACA" stroke-width="1.1" fill="#3A3C3F"/></svg>
<div class="t" style="left:167px;top:657px"><span style="color:#CDCDCD;">yudao-ui-admin-vue3/src/config/axios</span><span style="color:#8E8E8E;margin-left:10px;">1 result</span></div>
<svg style="position:absolute;left:148px;top:677px;" width="12" height="20" viewBox="0 0 12 20" fill="none"><path d="M2 8 L6.2 12.2 L10.4 8" stroke="#C8C8C8" stroke-width="1.3" stroke-linecap="round" stroke-linejoin="round"/></svg>
<svg style="position:absolute;left:166px;top:679px;" width="16" height="16" viewBox="0 0 16 16" fill="none"><path d="M5 1 H13 V9 H3 V3 Z" fill="#9AA7B0"/><path d="M3 3 L5 1 V3 Z" fill="#3C3E41"/><rect x="1" y="9" width="15" height="7" fill="#3D8FC6"/><text x="2.5" y="15.3" font-family="Liberation Sans" font-size="7" font-weight="700" fill="#1F3A55">TS</text></svg>
<div class="t" style="left:185px;top:677px"><span style="color:#CDCDCD;">service.ts</span><span style="color:#8E8E8E;margin-left:10px;">1 result</span></div>
<div class="t" style="left:185px;top:697px;letter-spacing:-0.1px"><span style="color:#8E8E8E;">229</span> <span style="color:#C9D6E3;letter-spacing:-0.25px;font-weight:700;letter-spacing:-0.35px;">wsCache.</span><span style="color:#C9D6E3;letter-spacing:0.4px;">clear()</span></div>
<svg style="position:absolute;left:130px;top:717px;" width="10" height="20" viewBox="0 0 10 20" fill="none"><path d="M4 6 L8.3 10 L4 14" stroke="#C8C8C8" stroke-width="1.3" stroke-linecap="round" stroke-linejoin="round"/></svg>
<svg style="position:absolute;left:148px;top:719px;" width="16" height="16" viewBox="0 0 16 16" fill="none"><path d="M1.5 4 Q1.5 2.5 3 2.5 H6.8 L8.8 4.5 H13 Q14.5 4.5 14.5 6 V12 Q14.5 13.5 13 13.5 H3 Q1.5 13.5 1.5 12 Z" stroke="#CACACA" stroke-width="1.1" fill="#3A3C3F"/></svg>
<div class="t" style="left:167px;top:717px"><span style="color:#CDCDCD;">yudao-ui-admin-vue3/src/directives/permission</span><span style="color:#8E8E8E;margin-left:10px;">2 results</span></div>
<svg style="position:absolute;left:130px;top:737px;" width="12" height="20" viewBox="0 0 12 20" fill="none"><path d="M2 8 L6.2 12.2 L10.4 8" stroke="#C8C8C8" stroke-width="1.3" stroke-linecap="round" stroke-linejoin="round"/></svg>
<svg style="position:absolute;left:148px;top:739px;" width="16" height="16" viewBox="0 0 16 16" fill="none"><path d="M1.5 4 Q1.5 2.5 3 2.5 H6.8 L8.8 4.5 H13 Q14.5 4.5 14.5 6 V12 Q14.5 13.5 13 13.5 H3 Q1.5 13.5 1.5 12 Z" stroke="#CACACA" stroke-width="1.1" fill="#3A3C3F"/></svg>
<div class="t" style="left:167px;top:737px"><span style="color:#CDCDCD;">yudao-ui-admin-vue3/src/layout/components/Setting/src</span><span style="color:#8E8E8E;margin-left:10px;">3 results</span></div>
<svg style="position:absolute;left:148px;top:757px;" width="12" height="20" viewBox="0 0 12 20" fill="none"><path d="M2 8 L6.2 12.2 L10.4 8" stroke="#C8C8C8" stroke-width="1.3" stroke-linecap="round" stroke-linejoin="round"/></svg>
<svg style="position:absolute;left:166px;top:759px;" width="16" height="16" viewBox="0 0 16 16" fill="none"><path d="M1 2.5 H4.2 L8 9 L11.8 2.5 H15 L8 14.5 Z" fill="#41B883"/><path d="M4.2 2.5 H6.6 L8 5 L9.4 2.5 H11.8 L8 9 Z" fill="#35495E"/></svg>
<div class="t" style="left:185px;top:757px"><span style="color:#CDCDCD;">Setting.vue</span><span style="color:#8E8E8E;margin-left:10px;">3 results</span></div>
<div class="t" style="left:185px;top:777px;letter-spacing:-0.1px"><span style="color:#8E8E8E;">193</span> <span style="color:#C9D6E3;letter-spacing:-0.25px;font-weight:700;letter-spacing:-0.35px;">wsCache.</span><span style="color:#C9D6E3;letter-spacing:-0.2px;">delete(CACHE_KEY.LAYOUT)</span></div>
<div class="t" style="left:185px;top:797px;letter-spacing:-0.1px"><span style="color:#8E8E8E;">194</span> <span style="color:#C9D6E3;letter-spacing:-0.25px;font-weight:700;letter-spacing:-0.35px;">wsCache.</span><span style="color:#C9D6E3;letter-spacing:-0.2px;">delete(CACHE_KEY.THEME)</span></div>
<div class="t" style="left:185px;top:817px;letter-spacing:-0.1px"><span style="color:#8E8E8E;">195</span> <span style="color:#C9D6E3;letter-spacing:-0.25px;font-weight:700;letter-spacing:-0.35px;">wsCache.</span><span style="color:#C9D6E3;letter-spacing:-0.2px;">delete(CACHE_KEY.IS_DARK)</span></div>
<svg style="position:absolute;left:130px;top:837px;" width="10" height="20" viewBox="0 0 10 20" fill="none"><path d="M4 6 L8.3 10 L4 14" stroke="#C8C8C8" stroke-width="1.3" stroke-linecap="round" stroke-linejoin="round"/></svg>
<svg style="position:absolute;left:148px;top:839px;" width="16" height="16" viewBox="0 0 16 16" fill="none"><path d="M1.5 4 Q1.5 2.5 3 2.5 H6.8 L8.8 4.5 H13 Q14.5 4.5 14.5 6 V12 Q14.5 13.5 13 13.5 H3 Q1.5 13.5 1.5 12 Z" stroke="#CACACA" stroke-width="1.1" fill="#3A3C3F"/></svg>
<div class="t" style="left:167px;top:837px"><span style="color:#CDCDCD;">yudao-ui-admin-vue3/src/layout/components/UserInfo/src</span><span style="color:#8E8E8E;margin-left:10px;">1 result</span></div>
<svg style="position:absolute;left:130px;top:857px;" width="10" height="20" viewBox="0 0 10 20" fill="none"><path d="M4 6 L8.3 10 L4 14" stroke="#C8C8C8" stroke-width="1.3" stroke-linecap="round" stroke-linejoin="round"/></svg>
<svg style="position:absolute;left:148px;top:859px;" width="16" height="16" viewBox="0 0 16 16" fill="none"><path d="M1.5 4 Q1.5 2.5 3 2.5 H6.8 L8.8 4.5 H13 Q14.5 4.5 14.5 6 V12 Q14.5 13.5 13 13.5 H3 Q1.5 13.5 1.5 12 Z" stroke="#CACACA" stroke-width="1.1" fill="#3A3C3F"/></svg>
<div class="t" style="left:167px;top:857px"><span style="color:#CDCDCD;">yudao-ui-admin-vue3/src/router</span><span style="color:#8E8E8E;margin-left:10px;">1 result</span></div>
<svg style="position:absolute;left:130px;top:877px;" width="10" height="20" viewBox="0 0 10 20" fill="none"><path d="M4 6 L8.3 10 L4 14" stroke="#C8C8C8" stroke-width="1.3" stroke-linecap="round" stroke-linejoin="round"/></svg>
<svg style="position:absolute;left:148px;top:879px;" width="16" height="16" viewBox="0 0 16 16" fill="none"><path d="M1.5 4 Q1.5 2.5 3 2.5 H6.8 L8.8 4.5 H13 Q14.5 4.5 14.5 6 V12 Q14.5 13.5 13 13.5 H3 Q1.5 13.5 1.5 12 Z" stroke="#CACACA" stroke-width="1.1" fill="#3A3C3F"/></svg>
<div class="t" style="left:167px;top:877px"><span style="color:#CDCDCD;">yudao-ui-admin-vue3/src/store/modules</span><span style="color:#8E8E8E;margin-left:10px;">20 results</span></div>
<svg style="position:absolute;left:130px;top:897px;" width="10" height="20" viewBox="0 0 10 20" fill="none"><path d="M4 6 L8.3 10 L4 14" stroke="#C8C8C8" stroke-width="1.3" stroke-linecap="round" stroke-linejoin="round"/></svg>
<svg style="position:absolute;left:148px;top:899px;" width="16" height="16" viewBox="0 0 16 16" fill="none"><path d="M1.5 4 Q1.5 2.5 3 2.5 H6.8 L8.8 4.5 H13 Q14.5 4.5 14.5 6 V12 Q14.5 13.5 13 13.5 H3 Q1.5 13.5 1.5 12 Z" stroke="#CACACA" stroke-width="1.1" fill="#3A3C3F"/></svg>
<div class="t" style="left:167px;top:897px"><span style="color:#CDCDCD;">yudao-ui-admin-vue3/src/utils</span><span style="color:#8E8E8E;margin-left:10px;">21 results</span></div>
<svg style="position:absolute;left:130px;top:917px;" width="10" height="20" viewBox="0 0 10 20" fill="none"><path d="M4 6 L8.3 10 L4 14" stroke="#C8C8C8" stroke-width="1.3" stroke-linecap="round" stroke-linejoin="round"/></svg>
<svg style="position:absolute;left:148px;top:919px;" width="16" height="16" viewBox="0 0 16 16" fill="none"><path d="M1.5 4 Q1.5 2.5 3 2.5 H6.8 L8.8 4.5 H13 Q14.5 4.5 14.5 6 V12 Q14.5 13.5 13 13.5 H3 Q1.5 13.5 1.5 12 Z" stroke="#CACACA" stroke-width="1.1" fill="#3A3C3F"/></svg>
<div class="t" style="left:167px;top:917px"><span style="color:#CDCDCD;">yudao-ui-admin-vue3/src/views/system/menu</span><span style="color:#8E8E8E;margin-left:10px;">1 result</span></div>
<svg style="position:absolute;left:94px;top:937px;" width="10" height="20" viewBox="0 0 10 20" fill="none"><path d="M4 6 L8.3 10 L4 14" stroke="#C8C8C8" stroke-width="1.3" stroke-linecap="round" stroke-linejoin="round"/></svg>
<div class="t" style="left:113px;top:937px"><span style="color:#CDCDCD;letter-spacing:0;">Usage in comments</span><span style="color:#8E8E8E;margin-left:10px;">1 result</span></div>
<svg style="position:absolute;left:10px;top:688px;" width="20" height="20" viewBox="0 0 20 20" fill="none"><path d="M9.5 2.5 A7.3 7.3 0 1 0 17.3 10.3" stroke="#7E8083" stroke-width="1.5" fill="none"/><path d="M11.8 2 V8.3 H18 A6.5 6.5 0 0 0 11.8 2 Z" stroke="#7E8083" stroke-width="1.3" fill="none"/></svg>
<svg style="position:absolute;left:10px;top:727px;" width="22" height="22" viewBox="0 0 22 22" fill="none"><path d="M1 9.5 L5.2 1.6 H14.8 L19 9.5 L14.8 17.4 H5.2 Z" stroke="#D6D6D6" stroke-width="1.4" fill="none" stroke-linejoin="round"/><path d="M7.6 5.6 L13.6 9.5 L7.6 13.4 Z" stroke="#D6D6D6" stroke-width="1.4" fill="none" stroke-linejoin="round"/><circle cx="16.7" cy="3.4" r="4.6" fill="#3C3E41"/><circle cx="16.7" cy="3.4" r="3.3" fill="#5FB85E"/></svg>
<svg style="position:absolute;left:10px;top:767px;" width="20" height="20" viewBox="0 0 20 20" fill="none"><path d="M1.8 1.8 H12.5 Q17 1.8 18.4 6.2 L14.2 4.8 H12.2 V18 Q12.2 18.6 11.6 18.6 H8.4 Q7.8 18.6 7.8 18 V4.8 H1.8 Z" stroke="#D6D6D6" stroke-width="1.4" fill="none" stroke-linejoin="round"/></svg>
<div style="position:absolute;left:5px;top:802px;width:30px;height:30px;background:#575A5F;border-radius:6px"></div>
<svg style="position:absolute;left:10px;top:807px;" width="20" height="20" viewBox="0 0 20 20" fill="none"><circle cx="9" cy="8.8" r="6.1" stroke="#D6D6D6" stroke-width="1.5"/><path d="M13.5 13.3 L18.6 18.2" stroke="#D6D6D6" stroke-width="1.6" stroke-linecap="round"/></svg>
<svg style="position:absolute;left:10px;top:847px;" width="20" height="20" viewBox="0 0 20 20" fill="none"><rect x="1.8" y="2.8" width="17" height="13.8" rx="1.8" stroke="#D6D6D6" stroke-width="1.5"/><path d="M5 6.6 L8 9.4 L5 12.2 M10 13.1 H15" stroke="#D6D6D6" stroke-width="1.5" fill="none"/></svg>
<svg style="position:absolute;left:10px;top:887px;" width="20" height="20" viewBox="0 0 20 20" fill="none"><circle cx="10.2" cy="9.8" r="8.2" stroke="#D6D6D6" stroke-width="1.5"/><path d="M10.2 5 V11" stroke="#D6D6D6" stroke-width="1.8"/><circle cx="10.2" cy="14.2" r="1.2" fill="#D6D6D6"/></svg>
<svg style="position:absolute;left:10px;top:926px;" width="20" height="20" viewBox="0 0 20 20" fill="none"><circle cx="5.9" cy="5.4" r="2.5" stroke="#D6D6D6" stroke-width="1.5"/><circle cx="14.3" cy="6.6" r="2.5" stroke="#D6D6D6" stroke-width="1.5"/><path d="M5.9 7.9 V18.8 M5.9 13.6 H10.5 Q14.3 13.6 14.3 9.1" stroke="#D6D6D6" stroke-width="1.5" fill="none"/></svg>
<svg style="position:absolute;left:1603px;top:12px;" width="24" height="24" viewBox="0 0 24 24" fill="none"><path d="M2.8 17.6 L5.2 14.6 V9 A5.3 5.9 0 0 1 15.8 9 V14.6 L18.3 17.6 Z" stroke="#D6D6D6" stroke-width="1.4" fill="none" stroke-linejoin="round"/><path d="M9 19.6 H12 A1.5 1.5 0 0 1 9 19.6 Z" fill="#D6D6D6"/><circle cx="17.2" cy="5.6" r="5" fill="#3C3E41"/><circle cx="17.2" cy="5.6" r="3.7" fill="#548AF7"/></svg>
<svg style="position:absolute;left:1603px;top:53px;" width="22" height="22" viewBox="0 0 22 22" fill="none"><ellipse cx="10.7" cy="4.6" rx="7.7" ry="2.4" stroke="#D6D6D6" stroke-width="1.4"/><path d="M3 4.6 V17.4 Q10.7 21.6 18.4 17.4 V4.6 M3 8.9 Q10.7 13.1 18.4 8.9 M3 13.1 Q10.7 17.3 18.4 13.1" stroke="#D6D6D6" stroke-width="1.4" fill="none"/></svg>
<svg style="position:absolute;left:1603px;top:96px;" width="22" height="16" viewBox="0 0 22 16" fill="none"><path d="M2 14.5 L4.6 3.5 M3.9 6.6 Q5.6 2.8 8.2 3.3 Q10.6 3.8 9.8 6.8 L7.9 14.5 M9.6 7.2 Q11.3 2.8 14.4 3.3 Q16.9 3.8 16.1 7 L14.2 14.5" stroke="#D6D6D6" stroke-width="1.3" fill="none" stroke-linecap="round" stroke-linejoin="round"/></svg>
<svg style="position:absolute;left:1602px;top:133px;" width="24" height="22" viewBox="0 0 24 22" fill="none"><circle cx="8.7" cy="7.3" r="3.4" stroke="#D6D6D6" stroke-width="1.5"/><circle cx="15.5" cy="7.3" r="3.4" stroke="#D6D6D6" stroke-width="1.5"/><path d="M3.5 11 Q1.8 12.5 1.8 14.8 Q2.2 19.2 12 19.6 Q21.8 19.2 22.2 14.8 Q22.2 12.5 20.5 11 Z" fill="#D6D6D6"/><rect x="7.2" y="11.6" width="9.8" height="6.2" rx="1" fill="#3C3E41"/><rect x="9.6" y="13" width="1.5" height="3.2" fill="#D6D6D6"/><rect x="13.2" y="13" width="1.5" height="3.2" fill="#D6D6D6"/></svg>
<svg style="position:absolute;left:8px;top:964px;" width="14" height="14" viewBox="0 0 14 14" fill="none"><rect x="3.6" y="5.6" width="6.8" height="6.8" rx="1.3" stroke="#548AF7" stroke-width="1.2" fill="#1E3048"/></svg>
<div class="t" style="left:23px;top:962px;color:#D0D0D0;font-size:14px;line-height:20px;font-weight:400;">ruoyi-vue-pro-2022b</div>
<svg style="position:absolute;left:160px;top:966px;" width="10" height="12" viewBox="0 0 10 12" fill="none"><path d="M3 2 L7 6 L3 10" stroke="#9A9A9A" stroke-width="1.2" fill="none"/></svg>
<div class="t" style="left:174px;top:962px;color:#D0D0D0;font-size:14px;line-height:20px;font-weight:400;">yudao-ui-admin-vue3</div>
<svg style="position:absolute;left:314px;top:966px;" width="10" height="12" viewBox="0 0 10 12" fill="none"><path d="M3 2 L7 6 L3 10" stroke="#9A9A9A" stroke-width="1.2" fill="none"/></svg>
<div class="t" style="left:328px;top:962px;color:#D0D0D0;font-size:14px;line-height:20px;font-weight:400;">src</div>
<svg style="position:absolute;left:351px;top:966px;" width="10" height="12" viewBox="0 0 10 12" fill="none"><path d="M3 2 L7 6 L3 10" stroke="#9A9A9A" stroke-width="1.2" fill="none"/></svg>
<svg style="position:absolute;left:364px;top:964px;" width="16" height="16" viewBox="0 0 16 16" fill="none"><path d="M1 2.5 H4.2 L8 9 L11.8 2.5 H15 L8 14.5 Z" fill="#41B883"/><path d="M4.2 2.5 H6.6 L8 5 L9.4 2.5 H11.8 L8 9 Z" fill="#35495E"/></svg>
<div class="t" style="left:383px;top:962px;color:#D0D0D0;font-size:14px;line-height:20px;font-weight:400;">App.vue</div>
<svg style="position:absolute;left:441px;top:966px;" width="10" height="12" viewBox="0 0 10 12" fill="none"><path d="M3 2 L7 6 L3 10" stroke="#9A9A9A" stroke-width="1.2" fill="none"/></svg>
<svg style="position:absolute;left:454px;top:964px;" width="16" height="16" viewBox="0 0 16 16" fill="none"><circle cx="8" cy="8" r="6.5" stroke="#E05555" stroke-width="1.2" fill="#4A2A2A"/><text x="5.3" y="12" font-family="Liberation Serif" font-style="italic" font-size="10" fill="#E05555">f</text></svg>
<div class="t" style="left:474px;top:962px;color:#D0D0D0;font-size:14px;line-height:20px;font-weight:400;">setDefaultTheme()</div>
<svg style="position:absolute;left:1315px;top:962px;" width="20" height="20" viewBox="0 0 20 20" fill="none"><g transform="scale(0.8)"><circle cx="8.7" cy="7.3" r="3.4" stroke="#CFCFCF" stroke-width="1.7"/><circle cx="15.5" cy="7.3" r="3.4" stroke="#CFCFCF" stroke-width="1.7"/><path d="M3.5 11 Q1.8 12.5 1.8 14.8 Q2.2 19.2 12 19.6 Q21.8 19.2 22.2 14.8 Q22.2 12.5 20.5 11 Z" fill="#CFCFCF"/><rect x="7.2" y="11.6" width="9.8" height="6.2" rx="1" fill="#3C3E41"/><rect x="9.6" y="13" width="1.6" height="3.2" fill="#CFCFCF"/><rect x="13.2" y="13" width="1.6" height="3.2" fill="#CFCFCF"/></g></svg>
<div class="t" style="left:1347px;top:962px;color:#D0D0D0;font-size:14px;line-height:20px;font-weight:400;letter-spacing:0">18:21</div>
<div class="t" style="left:1390px;top:962px;color:#D0D0D0;font-size:14px;line-height:20px;font-weight:400;letter-spacing:0">LF</div>
<div class="t" style="left:1418px;top:962px;color:#D0D0D0;font-size:14px;line-height:20px;font-weight:400;letter-spacing:0">2 spaces</div>
<div class="t" style="left:1486px;top:962px;color:#D0D0D0;font-size:14px;line-height:20px;font-weight:400;letter-spacing:0">Vue TypeScript 4.9.4</div>
<svg style="position:absolute;left:0px;top:0px;pointer-events:none" width="1635" height="987" viewBox="0 0 1635 987" fill="none"><rect x="35.75" y="459.75" width="798.5" height="500.5" rx="5" stroke="#FF2A0A" stroke-width="3.5" fill="none"/></svg>
<div class="t" style="left:244px;top:128px;color:#FF2A0A;font-size:18px;line-height:26px;font-weight:400;letter-spacing:0"><span style="font-size:17px">搜索</span> wsCache. 关键字</div>
<svg style="position:absolute;left:0px;top:0px;pointer-events:none" width="1635" height="987" viewBox="0 0 1635 987" fill="none"><path d="M220 143 C240 175 258 215 265 262 C270 300 266 330 264 347 C261 380 263 404 258 423 C255 434 250 443 246 452" stroke="#FF2A0A" stroke-width="3" fill="none" stroke-linecap="round"/><path d="M242.5 440.5 L246 452 L252.5 442.5 L247.5 444.5 Z" stroke="#FF2A0A" stroke-width="2.5" fill="#FF2A0A" stroke-linejoin="round"/></svg></body></html>
